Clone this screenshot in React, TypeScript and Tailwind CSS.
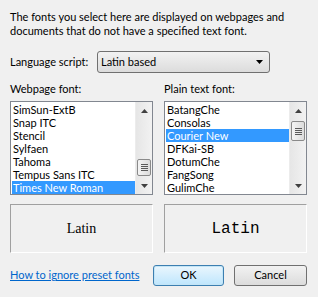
import React from 'react';

const leftFonts = ['SimSun-ExtB', 'Snap ITC', 'Stencil', 'Sylfaen', 'Tahoma', 'Tempus Sans ITC', 'Times New Roman'];
const rightFonts = ['BatangChe', 'Consolas', 'Courier New', 'DFKai-SB', 'DotumChe', 'FangSong', 'GulimChe'];

function ScrollBar({ thumbTop, thumbHeight }: { thumbTop: number; thumbHeight: number }) {
  return (
    <div className="w-[17px] h-full flex flex-col bg-gradient-to-r from-[#e6e6e6] to-[#f2f2f2] border-l border-[#ececec]">
      <div className="h-[17px] flex items-center justify-center">
        <svg width="7" height="4" viewBox="0 0 7 4">
          <path d="M3.5 0 L7 4 L0 4 Z" fill="#404040" />
        </svg>
      </div>
      <div className="flex-1 flex flex-col">
        <div style={{ height: thumbTop }} />
        <div
          className="mx-[1px] rounded-[2px] border border-[#8a8a8a] bg-gradient-to-r from-[#f4f4f4] to-[#dcdcdc] flex flex-col items-center justify-center gap-[1px]"
          style={{ height: thumbHeight }}
        >
          <div className="w-[7px] h-[1px] bg-[#5a5a5a]" />
          <div className="w-[7px] h-[1px] bg-[#5a5a5a]" />
          <div className="w-[7px] h-[1px] bg-[#5a5a5a]" />
          <div className="w-[7px] h-[1px] bg-[#5a5a5a]" />
        </div>
      </div>
      <div className="h-[17px] flex items-center justify-center">
        <svg width="7" height="4" viewBox="0 0 7 4">
          <path d="M0 0 L7 0 L3.5 4 Z" fill="#404040" />
        </svg>
      </div>
    </div>
  );
}

function ListBox({
  items,
  selected,
  thumbTop,
  thumbHeight,
}: {
  items: string[];
  selected: number;
  thumbTop: number;
  thumbHeight: number;
}) {
  return (
    <div className="h-[94px] border border-[#828790] bg-white flex overflow-hidden">
      <div className="flex-1 pt-[1px] pl-[1px]">
        {items.map((f, i) => (
          <div
            key={f}
            className={`h-[13px] leading-[13px] pl-[1px] whitespace-nowrap ${
              i === selected ? 'bg-[#3399ff] text-white' : 'text-black'
            }`}
          >
            {f}
          </div>
        ))}
      </div>
      <ScrollBar thumbTop={thumbTop} thumbHeight={thumbHeight} />
    </div>
  );
}

function Preview({ children }: { children: React.ReactNode }) {
  return (
    <div className="h-[49px] border border-t-[#a0a0a0] border-l-[#a0a0a0] border-b-white border-r-white flex items-center justify-center">
      {children}
    </div>
  );
}

export default function App() {
  return (
    <div
      className="w-[318px] h-[297px] bg-[#f0f0f0] px-[10px] pt-[10px] text-[11px] text-black overflow-hidden"
      style={{ fontFamily: 'Lato, "Liberation Sans", sans-serif' }}
    >
      <p className="leading-[14px] whitespace-nowrap">
        The fonts you select here are displayed on webpages and
        <br />
        documents that do not have a specified text font.
      </p>

      <div className="mt-[13px] flex items-center">
        <span className="w-[87px] whitespace-nowrap">Language script:</span>
        <div className="w-[173px] h-[22px] rounded-[3px] border border-[#707070] bg-gradient-to-b from-[#f2f2f2] to-[#dcdcdc] flex items-center pl-[3px] pr-[6px]">
          <span className="flex-1">Latin based</span>
          <svg width="7" height="4" viewBox="0 0 7 4">
            <path d="M0 0 L7 0 L3.5 4 Z" fill="#000" />
          </svg>
        </div>
      </div>

      <div className="mt-[9px] grid grid-cols-[143px_143px] gap-x-[11px]">
        <div className="leading-[14px]">Webpage font:</div>
        <div className="leading-[14px]">Plain text font:</div>
        <div className="mt-[5px]">
          <ListBox items={leftFonts} selected={6} thumbTop={40} thumbHeight={17} />
        </div>
        <div className="mt-[5px]">
          <ListBox items={rightFonts} selected={2} thumbTop={2} thumbHeight={20} />
        </div>
        <div className="mt-[9px]">
          <Preview>
            <span className="text-[14px]" style={{ fontFamily: '"Liberation Serif", serif' }}>
              Latin
            </span>
          </Preview>
        </div>
        <div className="mt-[9px]">
          <Preview>
            <span className="text-[16px]" style={{ fontFamily: '"Liberation Mono", monospace' }}>
              Latin
            </span>
          </Preview>
        </div>
      </div>

      <div className="mt-[12px] flex items-center">
        <a className="w-[143px] text-[#0066cc] underline whitespace-nowrap">How to ignore preset fonts</a>
        <button className="w-[71px] h-[21px] rounded-[3px] border border-[#3c7fb1] bg-gradient-to-b from-[#eaf6fd] to-[#bee6fd] shadow-[inset_0_0_0_1px_#c4e5f6]">
          OK
        </button>
        <button className="ml-[10px] w-[73px] h-[21px] rounded-[3px] border border-[#707070] bg-gradient-to-b from-[#f2f2f2] to-[#dcdcdc]">
          Cancel
        </button>
      </div>
    </div>
  );
}
